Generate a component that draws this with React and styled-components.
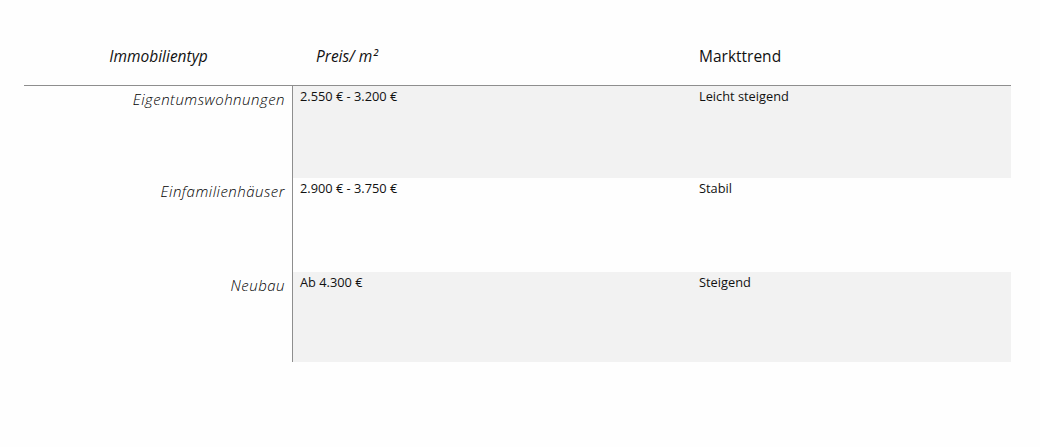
import React from 'react';
import styled, { createGlobalStyle } from 'styled-components';

const GlobalStyle = createGlobalStyle`
  html, body {
    margin: 0;
    padding: 0;
    background: #fefefe;
  }
  body {
    font-family: "Open Sans", "Noto Sans", sans-serif;
    color: #111;
  }
`;

const Page = styled.div`
  width: 1040px;
  height: 447px;
  padding-left: 24px;
  box-sizing: border-box;
`;

const Table = styled.div`
  width: 987px;
  display: grid;
  grid-template-columns: 269px 398px 320px;
`;

const HeadCell = styled.div`
  height: 86px;
  box-sizing: border-box;
  padding-top: 46px;
  padding-left: ${p => p.$indent || 0}px;
  border-bottom: 1px solid #8e8e8e;
  text-align: ${p => (p.$center ? 'center' : 'left')};
  font-size: 15.5px;
  line-height: 20px;
  font-style: ${p => (p.$italic ? 'italic' : 'normal')};
`;

const TypeCell = styled.div`
  height: ${p => p.$h}px;
  box-sizing: border-box;
  padding: 3px 7px 0 0;
  text-align: right;
  font-size: 15px;
  line-height: 20px;
  font-style: italic;
  font-weight: 300;
  color: #000;
  border-right: 1px solid #8e8e8e;
  letter-spacing: 0.5px;
`;

const DataCell = styled.div`
  height: ${p => p.$h}px;
  box-sizing: border-box;
  padding: 1px 0 0 ${p => p.$pad}px;
  background: ${p => (p.$shaded ? '#f2f2f2' : 'transparent')};
  font-size: 12.8px;
  line-height: 18px;
`;

const rows = [
  { type: 'Eigentumswohnungen', price: '2.550 € - 3.200 €', trend: 'Leicht steigend', h: 92, shaded: true },
  { type: 'Einfamilienhäuser', price: '2.900 € - 3.750 €', trend: 'Stabil', h: 94, shaded: false },
  { type: 'Neubau', price: 'Ab 4.300 €', trend: 'Steigend', h: 90, shaded: true },
];

export default function App() {
  return (
    <>
      <GlobalStyle />
      <Page>
        <Table>
          <HeadCell $center $italic>Immobilientyp</HeadCell>
          <HeadCell $italic $indent={23}>Preis/ m²</HeadCell>
          <HeadCell $indent={8}>Markttrend</HeadCell>
          {rows.map(r => (
            <React.Fragment key={r.type}>
              <TypeCell $h={r.h}>{r.type}</TypeCell>
              <DataCell $h={r.h} $shaded={r.shaded} $pad={7}>{r.price}</DataCell>
              <DataCell $h={r.h} $shaded={r.shaded} $pad={8}>{r.trend}</DataCell>
            </React.Fragment>
          ))}
        </Table>
      </Page>
    </>
  );
}
